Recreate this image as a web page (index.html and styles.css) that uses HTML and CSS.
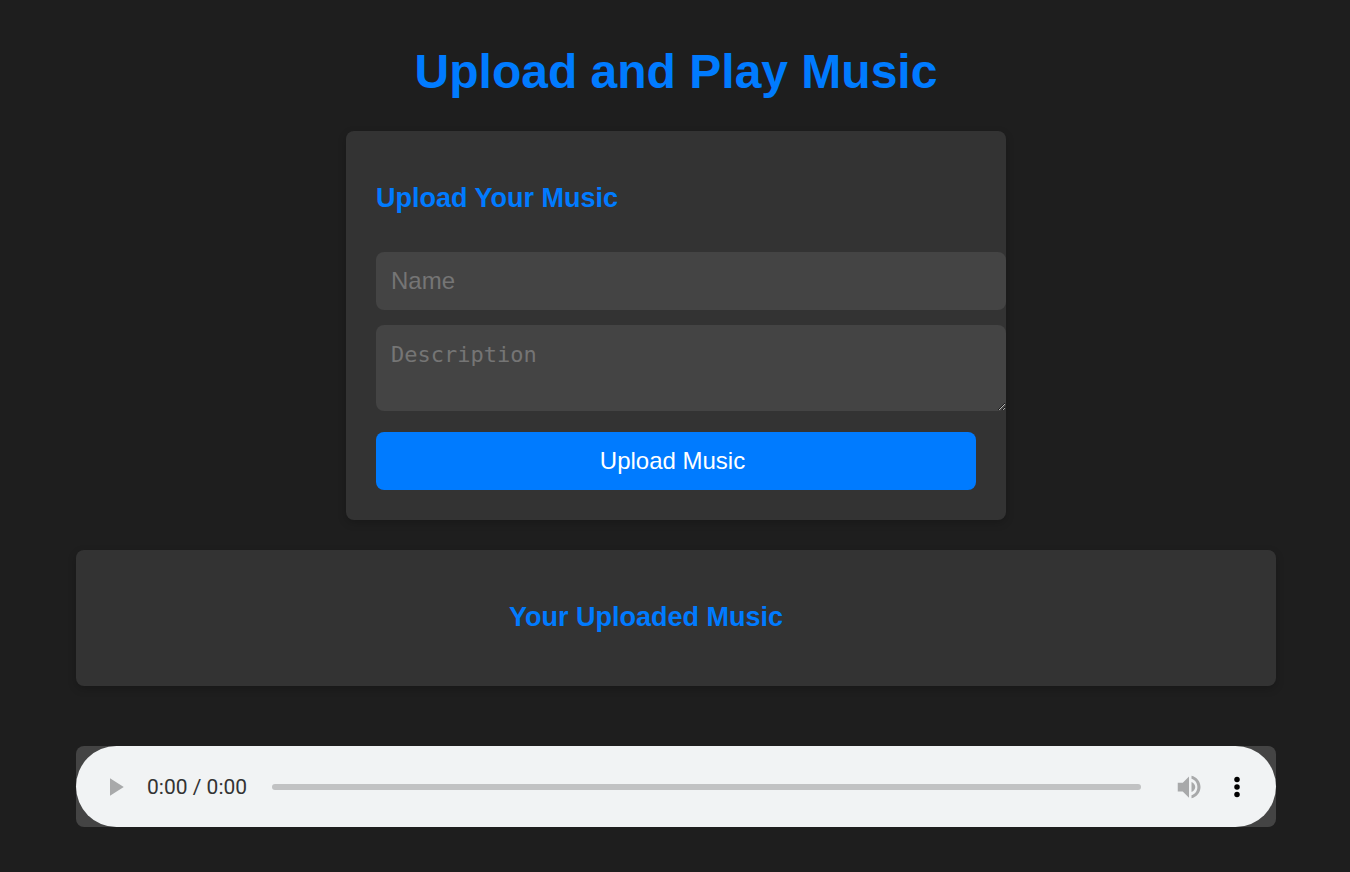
FILE: index.html
```html
<!DOCTYPE html>
<html lang="en">
<head>
<meta charset="utf-8">
<meta name="viewport" content="width=device-width, initial-scale=1">
<title>Upload and Play Music</title>
<link rel="stylesheet" href="styles.css">
</head>
<body>
<main class="page">
  <h1 class="title">Upload and Play Music</h1>

  <form class="card upload">
    <h2 class="heading">Upload Your Music</h2>
    <input class="field" type="text" placeholder="Name" aria-label="Name">
    <textarea class="field field-area" rows="2" placeholder="Description" aria-label="Description"></textarea>
    <button class="submit" type="button">Upload Music</button>
  </form>

  <section class="card library">
    <h2 class="heading">Your Uploaded Music</h2>
  </section>

  <section class="player" aria-label="Audio player">
    <div class="controls">
      <button class="control" type="button" aria-label="Play" disabled>
        <svg class="icon" viewBox="0 0 24 24"><path d="M8 5v14l11-7z" fill="#a8a9aa"/></svg>
      </button>
      <span class="time">0:00 / 0:00</span>
      <input class="seek" type="range" min="0" max="100" value="0" aria-label="Seek" disabled>
      <button class="control" type="button" aria-label="Mute" disabled>
        <svg class="icon" viewBox="0 0 24 24"><path d="M3 8.500v7h4l5 5V3.500l-5 5H3zm14 3.500c0-1.770-1.300-3.400-3-4.030v8.050c1.700-.630 3-2.250 3-4.020zM14 3v2.400c2.890.860 4.700 3.540 4.700 6.600s-1.810 5.740-4.700 6.600V21c4.010-.910 7.200-4.490 7.200-9s-3.190-8.090-7.200-9z" fill="#a8a9aa"/></svg>
      </button>
      <button class="control" type="button" aria-label="More options">
        <svg class="icon" viewBox="0 0 24 24"><circle cx="12" cy="6" r="2.200"/><circle cx="12" cy="12" r="2.200"/><circle cx="12" cy="18" r="2.200"/></svg>
      </button>
    </div>
  </section>
</main>
</body>
</html>
```

FILE: styles.css
```css
* {
  box-sizing: border-box;
}

body {
  margin: 0;
  background: #1e1e1e;
  color: #fff;
  font-family: "Liberation Sans", Arial, sans-serif;
}

.page {
  display: flex;
  flex-direction: column;
  align-items: center;
  padding: 44px 74px 45px 76px;
}

.title {
  margin: 0 0 32px;
  color: #007bff;
  font-size: 48px;
  line-height: 55px;
}

.card {
  width: 100%;
  padding: 30px;
  border-radius: 8px;
  background: #333;
  box-shadow: 0 3px 8px rgba(0, 0, 0, 0.2);
}

.heading {
  margin: 0;
  padding: 21px 0 23px;
  color: #007bff;
  font-size: 27px;
  line-height: 32px;
}

.upload {
  display: flex;
  flex-direction: column;
  max-width: 660px;
  margin-bottom: 30px;
}

.upload .heading {
  margin-bottom: 15px;
}

.field {
  display: block;
  width: calc(100% + 30px);
  margin: 0 0 15px;
  padding: 15px;
  border: 0;
  border-radius: 8px;
  background: #444;
  color: #fff;
  font-family: inherit;
  font-size: 24px;
  line-height: 28px;
}

.field::placeholder {
  color: #757575;
}

.field-area {
  margin-bottom: 21px;
  padding: 16px 15px 14px;
  font-family: Consolas, "DejaVu Sans Mono", monospace;
  font-size: 22px;
}

.submit {
  padding: 15px 22px 15px 15px;
  border: 0;
  border-radius: 8px;
  background: #007bff;
  color: #fff;
  font-family: inherit;
  font-size: 24px;
  line-height: 28px;
  cursor: pointer;
}

.library {
  margin-bottom: 60px;
  padding-right: 90px;
  text-align: center;
}

.player {
  width: 100%;
  border-radius: 8px;
  background: #444;
}

.controls {
  display: flex;
  align-items: center;
  padding: 17px 15px;
  border-radius: 41px;
  background: #f1f3f4;
}

.control {
  display: grid;
  place-items: center;
  width: 48px;
  height: 47px;
  padding: 0;
  border: 0;
  background: none;
}

.icon {
  width: 30px;
  height: 30px;
}

.time {
  margin: 0 25px 0 8px;
  color: #333;
  font-family: Roboto, sans-serif;
  font-size: 21px;
  line-height: 26px;
}

.seek {
  flex: 1;
  height: 6px;
  margin: 0 24px 0 0;
  appearance: none;
  border-radius: 3px;
  background: #c1c2c3;
}

.seek::-webkit-slider-thumb {
  appearance: none;
  width: 0;
  height: 0;
}
```
